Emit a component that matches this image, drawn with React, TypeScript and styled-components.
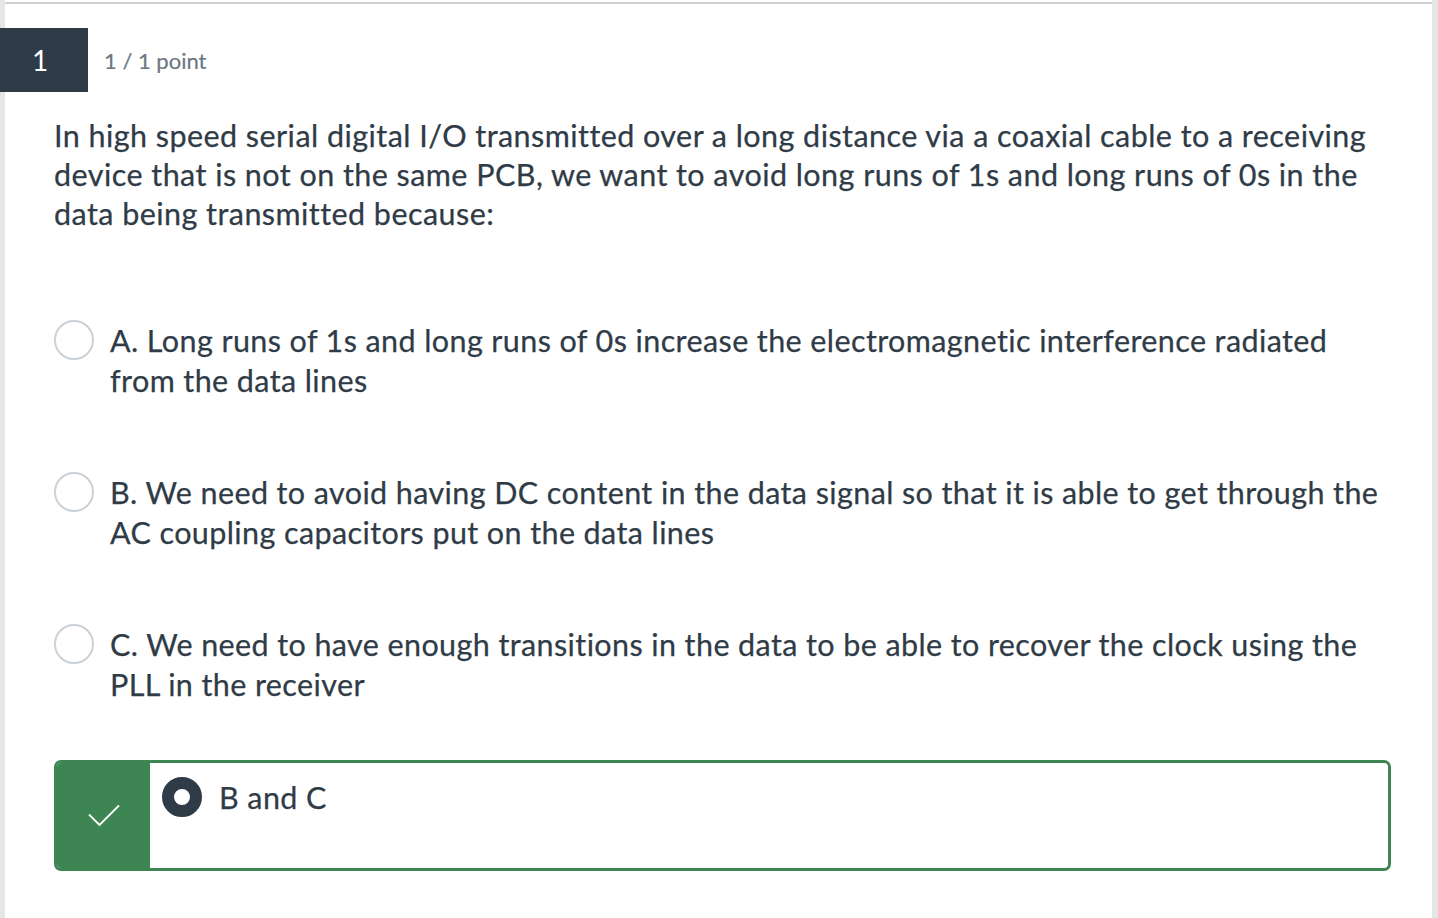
import React from "react";
import styled, { createGlobalStyle } from "styled-components";

const Global = createGlobalStyle`
  html, body { margin: 0; padding: 0; background: #e6e6e6; }
  body { font-family: Lato, "Noto Sans", sans-serif; color: #2f3b46; }
`;

const Panel = styled.div`
  margin: 0 6px 0 5px;
  background: #ffffff;
  min-height: 918px;
  padding-top: 2px;
  box-sizing: border-box;
`;

const TopRule = styled.div`
  height: 2px;
  background: #cdd2d7;
`;

const Header = styled.div`
  display: flex;
  align-items: center;
  margin-top: 24px;
  margin-left: -5px;
`;

const Badge = styled.div`
  width: 88px;
  height: 64px;
  background: #2f3b46;
  color: #ffffff;
  display: flex;
  align-items: center;
  justify-content: center;
  padding-right: 8px;
  box-sizing: border-box;
  font-size: 28px;
`;

const Points = styled.div`
  margin-left: 16px;
  font-size: 22px;
  color: #6b7783;
  -webkit-text-stroke: 0.2px currentColor;
`;

const Body = styled.div`
  padding: 0 41px 0 49px;
`;

const Question = styled.p`
  margin: 24px 0 0;
  font-size: 30.5px;
  line-height: 39px;
  letter-spacing: 0.45px;
  -webkit-text-stroke: 0.25px currentColor;
`;

const Options = styled.div`
  display: flex;
  flex-direction: column;
  margin-top: 87px;
`;

const Option = styled.div<{ $gap: number }>`
  display: flex;
  align-items: flex-start;
  gap: 16px;
  margin-bottom: ${(p) => p.$gap}px;
`;

const Radio = styled.span`
  flex: none;
  width: 40px;
  height: 40px;
  border-radius: 50%;
  border: 2px solid #cbd1d6;
  box-sizing: border-box;
  background: #fff;
`;

const RadioChecked = styled(Radio)`
  border: 12px solid #2f3b46;
`;

const OptionText = styled.div`
  font-size: 30.5px;
  line-height: 40px;
  letter-spacing: 0.4px;
  -webkit-text-stroke: 0.25px currentColor;
`;

const Answer = styled.div`
  display: flex;
  height: 111px;
  border: 3px solid #3d8654;
  border-radius: 7px;
  box-sizing: border-box;
  overflow: hidden;
`;

const Mark = styled.div`
  width: 93px;
  flex: none;
  background: #3d8654;
  display: flex;
  align-items: center;
  justify-content: center;
`;

const AnswerContent = styled.div`
  display: flex;
  align-items: flex-start;
  gap: 17px;
  padding: 14px 12px;
`;

const options = [
  "A. Long runs of 1s and long runs of 0s increase the electromagnetic interference radiated from the data lines",
  "B. We need to avoid having DC content in the data signal so that it is able to get through the AC coupling capacitors put on the data lines",
  "C. We need to have enough transitions in the data to be able to recover the clock using the PLL in the receiver",
];

const gaps = [72, 72, 56];

export default function App() {
  return (
    <>
      <Global />
      <Panel>
        <TopRule />
        <Header>
          <Badge>1</Badge>
          <Points>1 / 1 point</Points>
        </Header>
        <Body>
          <Question>
            In high speed serial digital I/O transmitted over a long distance via a coaxial cable to a receiving
            device that is not on the same PCB, we want to avoid long runs of 1s and long runs of 0s in the data
            being transmitted because:
          </Question>
          <Options>
            {options.map((o, i) => (
              <Option key={i} $gap={gaps[i]}>
                <Radio />
                <OptionText>{o}</OptionText>
              </Option>
            ))}
            <Answer>
              <Mark>
                <svg width="34" height="24" viewBox="0 0 34 24" fill="none">
                  <path d="M2 10.5 L12.5 21 L32 1.5" stroke="#ffffff" strokeWidth="1.8" />
                </svg>
              </Mark>
              <AnswerContent>
                <RadioChecked />
                <OptionText>B and C</OptionText>
              </AnswerContent>
            </Answer>
          </Options>
        </Body>
      </Panel>
    </>
  );
}
